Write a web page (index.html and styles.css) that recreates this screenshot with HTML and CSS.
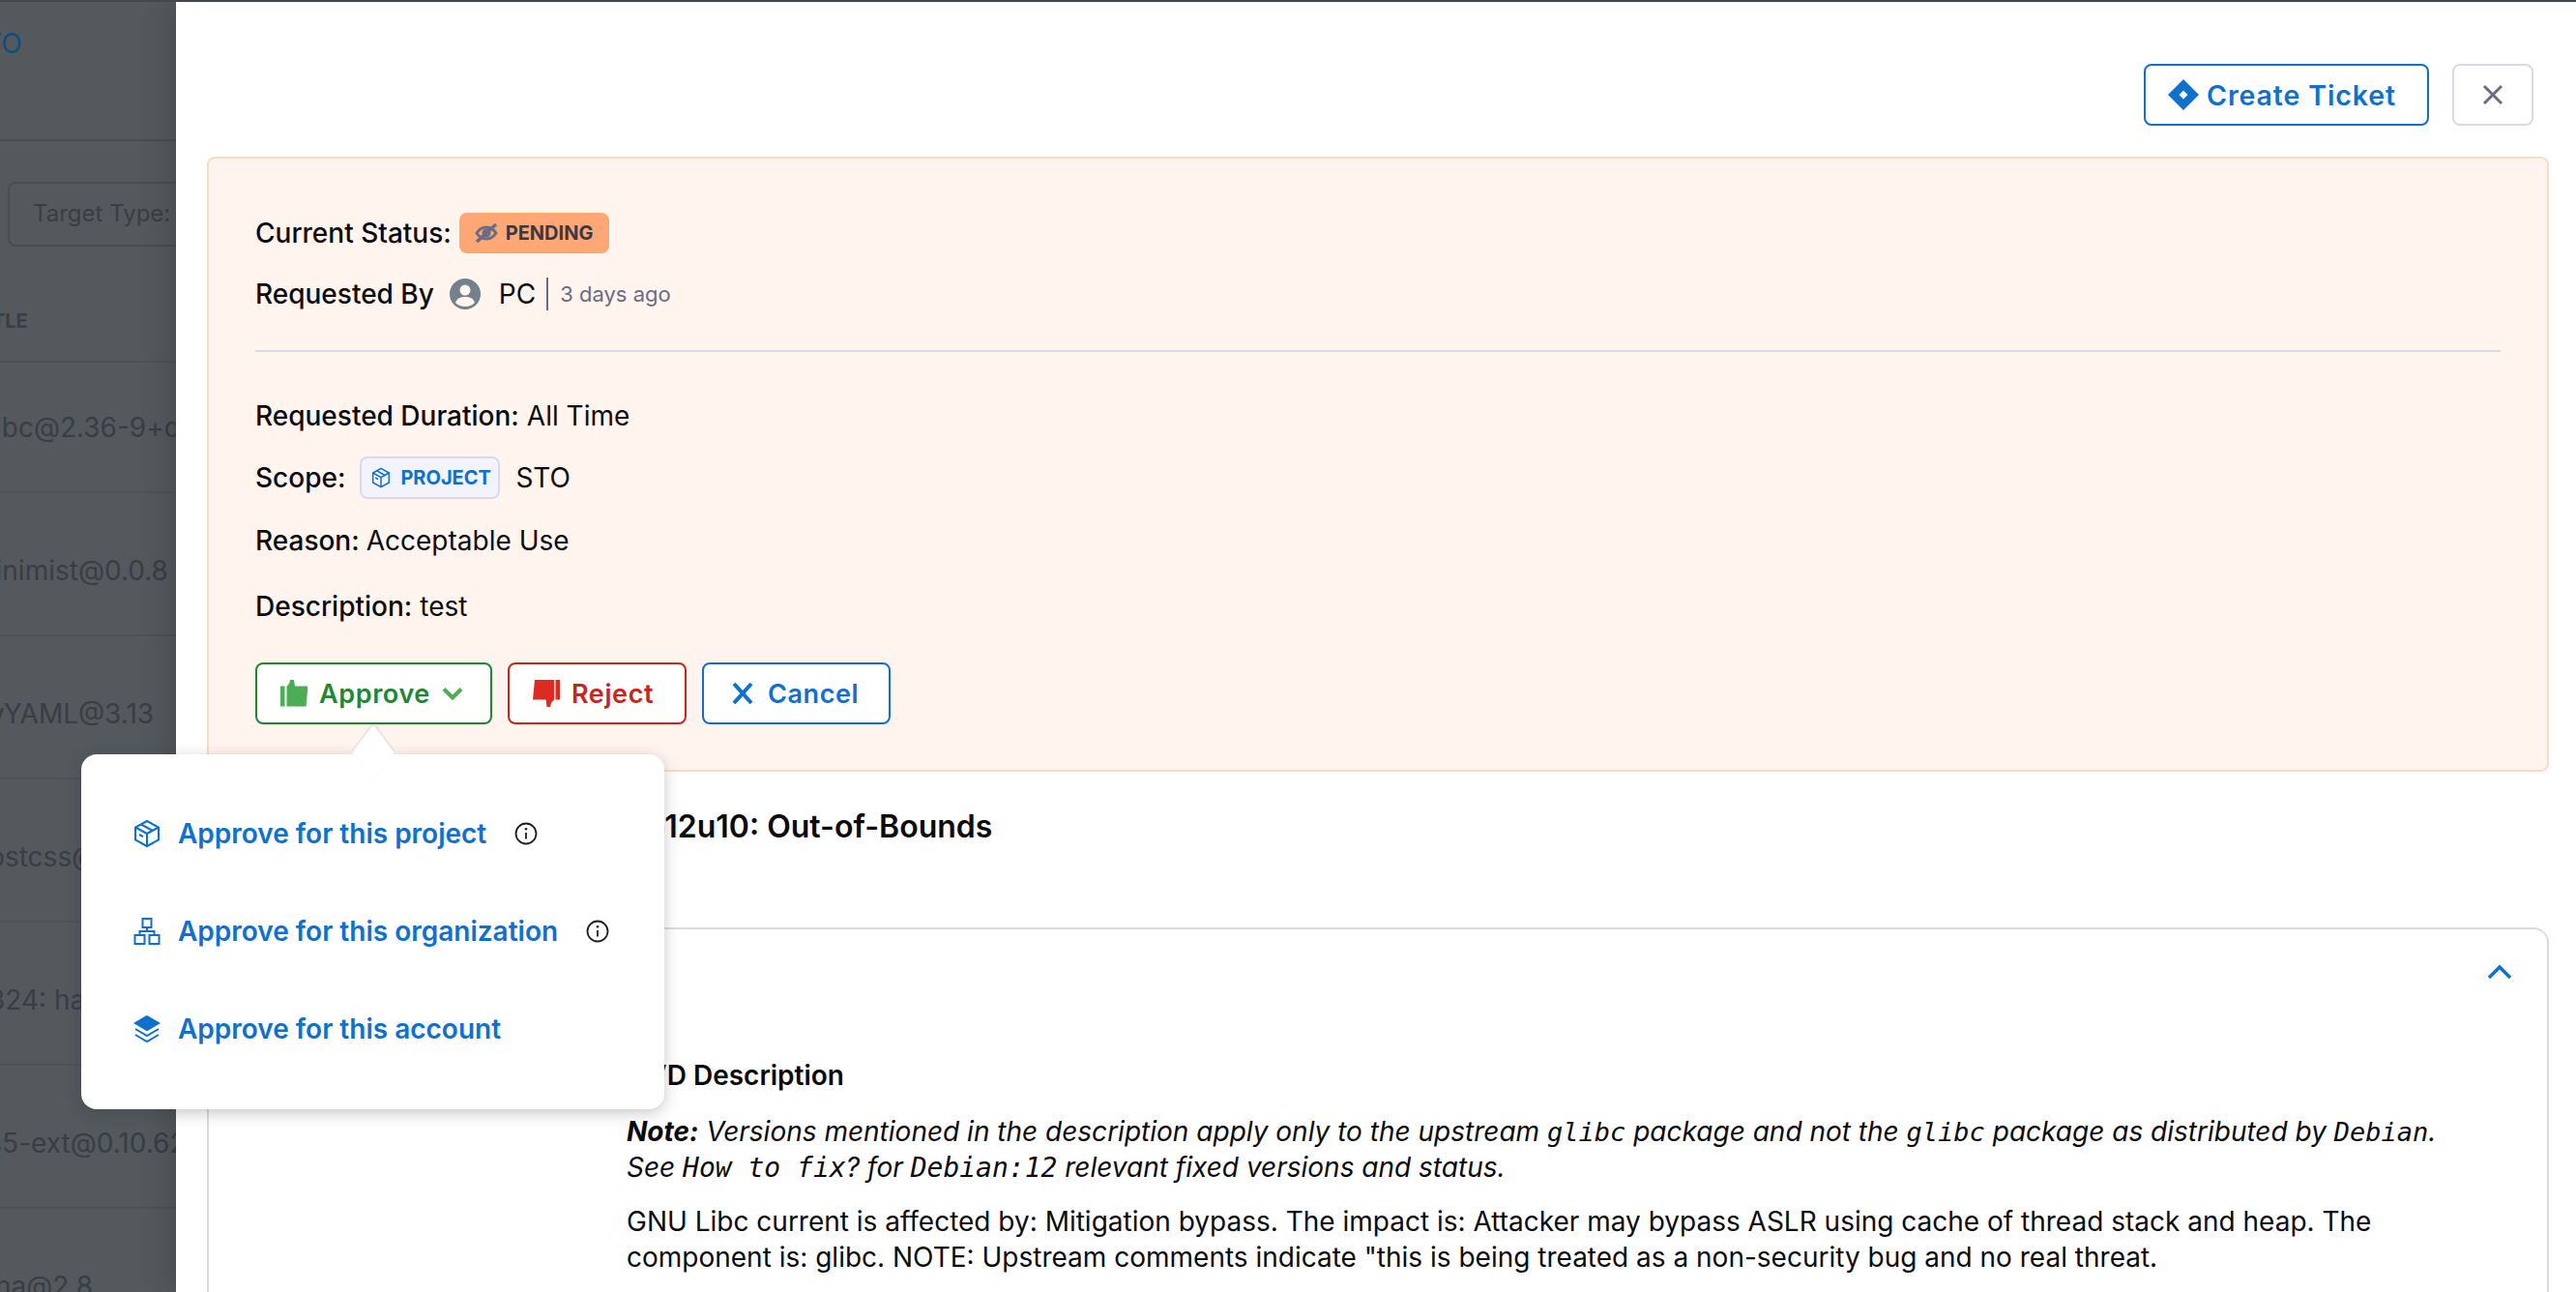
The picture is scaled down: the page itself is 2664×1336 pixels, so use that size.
FILE: index.html
```html
<!DOCTYPE html>
<html lang="en">
<head>
<meta charset="utf-8">
<title>Exemption details</title>
<link rel="stylesheet" href="styles.css">
</head>
<body>
<div class="page">
  <aside class="backdrop">
    <div class="bd-head"><span class="bd-link">STO</span></div>
    <div class="bd-filter"><div class="bd-chip">Target Type:</div></div>
    <div class="bd-title">TITLE</div>
    <div class="bd-row">glibc@2.36-9+deb12u10</div>
    <div class="bd-row">minimist@0.0.8</div>
    <div class="bd-row">PyYAML@3.13</div>
    <div class="bd-row">postcss@8.4.31</div>
    <div class="bd-row">2324: hash-base</div>
    <div class="bd-row">es5-ext@0.10.62</div>
    <div class="bd-row">idna@2.8</div>
  </aside>
  <main class="drawer">
    <header class="topbar">
      <button class="btn btn-ticket">
        <svg class="ic-jira" viewBox="0 0 32 32"><path fill-rule="evenodd" d="M16 0 32 16 16 32 0 16ZM16 11.500 11.500 16 16 20.500 20.500 16Z"/></svg>
        Create Ticket
      </button>
      <button class="btn-close" aria-label="Close">
        <svg viewBox="0 0 22 22"><path d="M2 2 20 20M20 2 2 20"/></svg>
      </button>
    </header>

    <section class="banner">
      <div class="line line-status">
        <span class="lbl">Current Status:</span>
        <span class="badge-pending">
          <svg viewBox="0 0 24 20"><path d="M2 10c2.500-4 6-6 10-6s7.500 2 10 6c-2.500 4-6 6-10 6s-7.500-2-10-6Z"/><circle cx="12" cy="10" r="3"/><path class="slash" d="M2 19 22 1"/></svg>
          PENDING
        </span>
      </div>
      <div class="line line-req">
        <span class="lbl">Requested By</span>
        <svg class="ic-user" viewBox="0 0 32 32"><circle cx="16" cy="16" r="16"/><circle class="hole" cx="16" cy="12" r="5.500"/><path class="hole" d="M6 25c1.500-4.500 5-6 10-6s8.500 1.500 10 6c-2.500 2.500-6 4-10 4s-7.500-1.500-10-4Z"/></svg>
        <span class="who">PC</span>
        <span class="when">3 days ago</span>
      </div>
      <hr class="rule">
      <p class="field f-duration"><b>Requested Duration:</b> All Time</p>
      <div class="field f-scope">
        <b>Scope:</b>
        <span class="badge-scope">
          <svg class="ic-cube" viewBox="0 0 24 26"><path d="M12 1.500 22 7v12l-10 5.500L2 19V7Z"/><path d="M2 7l10 5.500L22 7M12 12.500v12M7 4.500 17 10"/><path d="M5 13l3.500 2"/></svg>
          PROJECT
        </span>
        <span class="scope-name">STO</span>
      </div>
      <p class="field f-reason"><b>Reason:</b> Acceptable Use</p>
      <p class="field f-desc"><b>Description:</b> test</p>
      <div class="actions">
        <button class="btn btn-approve">
          <svg class="ic-thumb" viewBox="0 0 28 28"><path d="M0 6.500H4.500V27.500H0ZM6.500 6.500 9 4 10 0H14L15 6.500H28.500L26.500 27.500H6.500Z"/></svg>
          Approve
          <svg class="ic-chev" viewBox="0 0 22 14"><path d="M2 2.500 11 11.500 20 2.500"/></svg>
        </button>
        <button class="btn btn-reject">
          <svg class="ic-thumb" viewBox="0 0 28 28"><path d="M2 0H22V20.500L19 24 18 28H14.500L13.500 20.500H0ZM23.500 0H28V20.500H23.500Z"/></svg>
          Reject
        </button>
        <button class="btn btn-cancel">
          <svg class="ic-x" viewBox="0 0 24 24"><path d="M3 2 21 22M21 2 3 22"/></svg>
          Cancel
        </button>
      </div>
    </section>

    <h2 class="vuln-title">glibc@2.36-9+deb12u10: Out-of-Bounds</h2>

    <section class="card">
      <button class="collapse" aria-label="Collapse">
        <svg viewBox="0 0 26 16"><path d="M2 14 13 3 24 14"/></svg>
      </button>
      <h3 class="card-h">NVD Description</h3>
      <p class="note"><em><b>Note:</b> Versions mentioned in the description apply only to the upstream <code>glibc</code> package and not the <code>glibc</code> package as distributed by <code>Debian</code>.<br>See <code class="code-wide">How to fix</code>? for <code class="code-wide">Debian:12</code> relevant fixed versions and status.</em></p>
      <p class="body">GNU Libc current is affected by: Mitigation bypass. The impact is: Attacker may bypass ASLR using cache of thread stack and heap. The component is: glibc. NOTE: Upstream comments indicate "this is being treated as a non-security bug and no real threat.</p>
    </section>
  </main>

  <div class="popover">
    <ul class="menu">
      <li class="menu-item">
        <svg class="mi" viewBox="0 0 28 30"><path d="M14 2 26 8.500v13L14 28 2 21.500v-13Z"/><path d="M2 8.500 14 15 26 8.500M14 15v13M8 5.500 20 12M6 16l4 2.200"/></svg>
        <span class="mi-text">Approve for this project</span>
        <svg class="info" viewBox="0 0 24 24"><circle cx="12" cy="12" r="10.500"/><path d="M12 11v6.500"/><circle class="dot" cx="12" cy="7.300" r="1.300"/></svg>
      </li>
      <li class="menu-item">
        <svg class="mi" viewBox="0 0 28 30"><path d="M9.500 2h9v9h-9ZM1.500 19h10v9h-10ZM16.500 19h10v9h-10ZM14 11v4M6.500 19v-4h15v4"/></svg>
        <span class="mi-text">Approve for this organization</span>
        <svg class="info" viewBox="0 0 24 24"><circle cx="12" cy="12" r="10.500"/><path d="M12 11v6.500"/><circle class="dot" cx="12" cy="7.300" r="1.300"/></svg>
      </li>
      <li class="menu-item">
        <svg class="mi" viewBox="0 0 28 30"><path class="fill" d="M14 2 26 9 14 16 2 9Z"/><path d="M2 15l12 7 12-7M2 21l12 7 12-7"/></svg>
        <span class="mi-text">Approve for this account</span>
      </li>
    </ul>
  </div>
</div>
</body>
</html>
```
FILE: styles.css
```css
* { box-sizing: border-box; }
html, body { margin: 0; height: 100%; overflow: hidden; }
body { font-family: Inter, "Liberation Sans", sans-serif; font-size: 28px; color: #0b0b0d; background: #fff; }
button { font: inherit; cursor: pointer; }
p, h2, h3, ul { margin: 0; padding: 0; }
ul { list-style: none; }

.page { position: relative; display: flex; height: 1336px; overflow: hidden; border-top: 2px solid #44484c; }

/* dimmed page behind the drawer */
.backdrop { flex: 0 0 182px; overflow: hidden; background: #54595d; color: #393d46; white-space: nowrap; }
.bd-head { height: 144px; border-bottom: 2px solid #494d52; padding-top: 24px; }
.bd-link { display: block; margin-left: -34px; color: #0f4d80; line-height: 38px; font-size: 28px; }
.bd-filter { height: 114px; padding: 42px 0 0 8px; }
.bd-chip { width: 220px; height: 67px; border: 2px solid #494d52; border-radius: 8px; padding-left: 24px; line-height: 62px; font-size: 24px; }
.bd-title { height: 115px; margin-left: -27px; padding-top: 56px; font-size: 20px; font-weight: 700; line-height: 32px; border-bottom: 2px solid #4e5257; }
.bd-row { height: 135px; margin: 0 0 13px -29px; line-height: 134px; border-bottom: 2px solid #4e5257; font-size: 28px; }

/* drawer */
.drawer { flex: 1; min-width: 0; background: #fff; padding: 0 28px 0 32px; box-shadow: -12px 0 24px rgba(0,0,0,.12); position: relative; }
.topbar { display: flex; justify-content: flex-end; align-items: flex-start; gap: 24px; height: 160px; padding: 64px 16px 0 0; }

.btn { display: inline-flex; align-items: center; height: 64px; border-radius: 8px; border: 2.500px solid currentColor; background: #fff; font-size: 27px; font-weight: 600; letter-spacing: .6px; padding: 0; }
.btn-ticket { width: 295px; color: #0f70cd; padding-left: 23px; gap: 8px; font-size: 28.500px; letter-spacing: .9px; }
.ic-jira { width: 32px; height: 32px; fill: #0f70cd; }
.btn-close { width: 84px; height: 64px; border: 2.500px solid #d9dae5; border-radius: 8px; background: #fff; padding: 0; display: flex; align-items: center; justify-content: center; }
.btn-close svg { width: 22px; height: 22px; fill: none; stroke: #6b6d85; stroke-width: 3; }

.banner { height: 636px; background: #fff4ee; border: 2px solid #fddac4; border-radius: 8px; padding: 56px 48px 0; }
.line { display: flex; align-items: center; }
.lbl { font-weight: 500; }
.line-status { height: 42px; gap: 8px; }
.badge-pending { display: inline-flex; align-items: center; gap: 8px; width: 155px; height: 42px; padding-left: 16px; border-radius: 8px; background: #ffa775; color: #383946; font-size: 20px; font-weight: 700; }
.badge-pending svg { width: 24px; height: 20px; fill: none; stroke: #6b6d85; stroke-width: 3; }
.badge-pending .slash { stroke-width: 3.500; }
.line-req { height: 44px; margin-top: 20px; }
.ic-user { width: 32px; height: 32px; margin-left: 16px; fill: #74808c; }
.ic-user .hole { fill: #fff4ee; }
.who { margin-left: 19px; }
.when { margin-left: 11px; padding-left: 12px; border-left: 2px solid #6b6d85; color: #6b6d85; font-size: 22px; line-height: 34px; }
.rule { border: 0; height: 2px; background: #d9dae5; margin: 36px 0 0; }

.field { display: flex; align-items: center; gap: 8px; height: 44px; }
.field b { font-weight: 500; }
.f-duration { margin-top: 44px; }
.f-scope { margin-top: 20px; }
.f-reason { margin-top: 21px; gap: 7px; }
.f-desc { margin-top: 24px; }
.badge-scope { display: inline-flex; align-items: center; gap: 10px; width: 145px; height: 44px; margin-left: 7px; padding-left: 10px; background: #f3f4fb; border: 2px solid #d9dae5; border-radius: 8px; color: #0f70cd; font-size: 20px; font-weight: 700; }
.ic-cube { width: 20px; height: 22px; fill: none; stroke: #0f70cd; stroke-width: 1.800; }
.scope-name { margin-left: 8px; }

.actions { display: flex; gap: 16px; margin-top: 36px; }
.btn-approve { width: 245px; padding-left: 24px; gap: 12px; color: #1f8730; }
.btn-approve .ic-thumb { fill: #4dad55; }
.btn-reject { width: 185px; padding-left: 24px; gap: 12px; color: #c7261c; }
.btn-reject .ic-thumb { fill: #da2c22; }
.btn-cancel { width: 195px; padding-left: 28px; gap: 14px; color: #0f70cd; }
.ic-thumb { width: 28px; height: 28px; }
.ic-chev { width: 22px; height: 14px; fill: none; stroke: #4dad55; stroke-width: 4; }
.ic-x { width: 24px; height: 24px; fill: none; stroke: #0f70cd; stroke-width: 4; }

.vuln-title { margin-top: 37px; padding-left: 181px; font-size: 32px; font-weight: 600; line-height: 40px; }

.card { position: relative; margin-top: 84px; min-height: 500px; border: 2px solid #d9dae5; border-radius: 16px; padding: 131px 60px 0 432px; }
.collapse { position: absolute; top: 36px; right: 36px; width: 26px; height: 16px; padding: 0; background: none; border: 0; }
.collapse svg { display: block; width: 26px; height: 16px; fill: none; stroke: #0f70cd; stroke-width: 3.500; }
.card-h { font-size: 28px; font-weight: 600; line-height: 40px; margin-bottom: 20px; }
.note { line-height: 37px; margin-bottom: 19px; }
.note b { font-weight: 700; }
code { font-family: "DejaVu Sans Mono", "Liberation Mono", monospace; font-size: 27px; line-height: 1; }
.code-wide { font-size: 28px; }
.body { line-height: 37px; }

/* approve menu */
.popover { position: absolute; left: 84px; top: 778px; width: 603px; height: 367px; background: #fff; border-radius: 16px; box-shadow: 0 4px 16px rgba(40,41,61,.25); padding: 31px 0 0 54px; }
.popover::before { content: ""; position: absolute; left: 284px; top: -20px; width: 36px; height: 36px; background: #fff; transform: rotate(45deg) skew(8deg,8deg); border-radius: 4px 0 0 0; box-shadow: -1px -1px 2px rgba(40,41,61,.15); }
.menu { position: relative; }
.menu-item { display: flex; align-items: center; height: 101px; color: #0f70cd; font-weight: 600; white-space: nowrap; }
.mi { width: 28px; height: 30px; fill: none; stroke: #0f70cd; stroke-width: 2; }
.mi .fill { fill: #0f70cd; }
.mi-text { margin-left: 18px; }
.info { width: 24px; height: 24px; margin-left: 29px; fill: none; stroke: #1d1e26; stroke-width: 1.800; }
.info .dot { fill: #1d1e26; stroke: none; }
```
